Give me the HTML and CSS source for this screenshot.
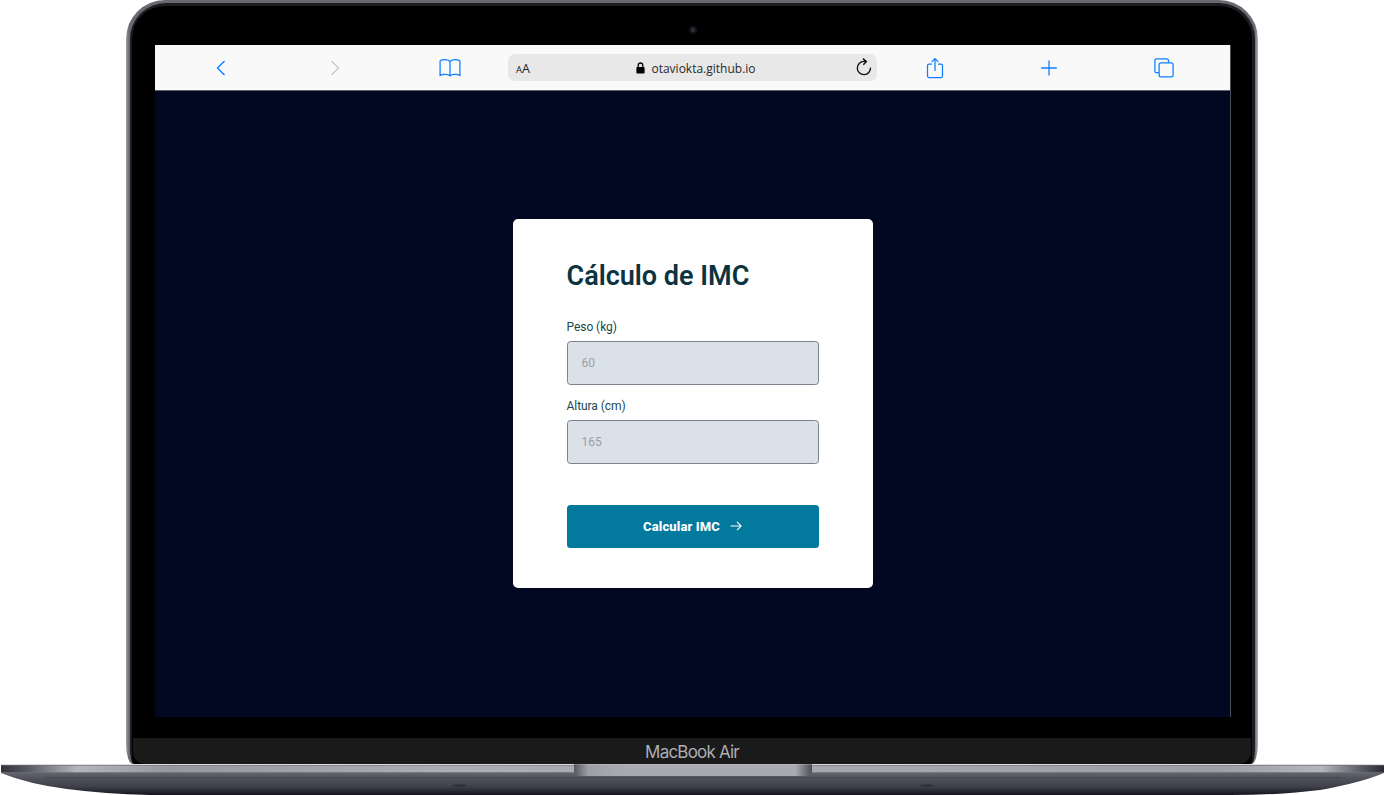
FILE: index.html
```html
<!DOCTYPE html>
<html lang="pt-BR">
<head>
<meta charset="utf-8">
<title>Cálculo de IMC</title>
<link rel="stylesheet" href="styles.css">
</head>
<body>
<div class="laptop">
  <div class="lid">
    <div class="rim">
      <div class="bezel">
        <div class="camera-row"><span class="camera"></span></div>
        <div class="screen">
          <header class="toolbar">
            <span class="tool"><svg width="10" height="16" viewBox="0 0 10 16"><path d="M8.5 1 1.5 8l7 7" stroke-width="1.4"/></svg></span>
            <span class="tool tool-off"><svg width="10" height="16" viewBox="0 0 10 16"><path d="M1.5 1l7 7-7 7" stroke-width="1.4"/></svg></span>
            <span class="tool"><svg width="22" height="18" viewBox="0 0 22 18"><path d="M11 2.6C9.5.3 3.5.1 1.1 2v14.4c2.4-1.4 8.2-1.4 9.9.5 1.7-1.9 7.500-1.9 9.900-.5V2C18.500.1 12.500.3 11 2.600v14.300" stroke-width="1.25"/></svg></span>
            <div class="address">
              <span class="text-size"><small>A</small>A</span>
              <span class="url"><svg width="9" height="12" viewBox="0 0 9 12"><rect x=".4" y="5" width="8.200" height="6.500" rx="1" fill="#000" stroke="none"/><path d="M2.200 5.500V3.300a2.300 2.300 0 0 1 4.600 0v2.200" stroke="#000" stroke-width="1.300"/></svg>otaviokta.github.io</span>
              <svg class="reload" width="16" height="18" viewBox="0 0 16 18"><path d="M14.500 9.600A6.600 6.600 0 1 1 7.900 3.400h2.300M6.900.6l3.500 2.900-3.100 3.300" stroke="#111" stroke-width="1.400"/></svg>
            </div>
            <span class="tool"><svg width="18" height="22" viewBox="0 0 18 22"><path d="M6 7H3Q1.500 7 1.500 8.500V19Q1.500 20.500 3 20.500H15Q16.500 20.500 16.500 19V8.500Q16.500 7 15 7H12M9 14V1.700M5.700 4.900 9 1.600l3.300 3.300" stroke-width="1.250"/></svg></span>
            <span class="tool"><svg width="16" height="16" viewBox="0 0 16 16"><path d="M8 .5v15M.2 8h15.600" stroke-width="1.300"/></svg></span>
            <span class="tool"><svg width="20" height="20" viewBox="0 0 20 20"><path d="M5 14.700H2.700Q.9 14.700.9 12.900V2.700Q.9.900 2.700.900H12.700Q14.500.900 14.500 2.700V4.700" stroke-width="1.250"/><rect x="5.100" y="4.900" width="14" height="14" rx="1.900" stroke-width="1.250"/></svg></span>
          </header>
          <main class="page">
            <form class="card">
              <h1>Cálculo de IMC</h1>
              <label for="peso">Peso (kg)</label>
              <input id="peso" type="text" placeholder="60">
              <label for="altura">Altura (cm)</label>
              <input id="altura" type="text" placeholder="165">
              <button type="button">Calcular IMC<svg width="12" height="10" viewBox="0 0 12 10"><path d="M.5 5h10.500M7 .8 11.200 5 7 9.200" stroke-width="1.100"/></svg></button>
            </form>
          </main>
        </div>
        <div class="chin-wrap"><div class="chin">MacBook Air</div></div>
      </div>
    </div>
  </div>
  <svg class="base" width="1384" height="31" viewBox="0 0 1384 31">
    <defs>
      <linearGradient id="edge">
        <stop offset="0" stop-color="#30313b"/><stop offset=".018" stop-color="#555660"/><stop offset=".055" stop-color="#b5b6bc"/><stop offset=".12" stop-color="#97989e"/><stop offset=".32" stop-color="#acadb3"/><stop offset=".7" stop-color="#a4a5ab"/><stop offset=".88" stop-color="#9d9ea4"/><stop offset=".955" stop-color="#b5b6bc"/><stop offset=".985" stop-color="#555660"/><stop offset="1" stop-color="#282933"/>
      </linearGradient>
      <linearGradient id="under" x2="0" y2="1">
        <stop offset="0" stop-color="#62636b"/><stop offset=".25" stop-color="#50515a"/><stop offset=".6" stop-color="#40414b"/><stop offset=".9" stop-color="#20202b"/><stop offset="1" stop-color="#11101b"/>
      </linearGradient>
      <linearGradient id="notch">
        <stop offset="0" stop-color="#55565f"/><stop offset=".06" stop-color="#9fa0a7"/><stop offset=".2" stop-color="#a9aab1"/><stop offset=".93" stop-color="#aaabb1"/><stop offset="1" stop-color="#4b4c55"/>
      </linearGradient>
    </defs>
    <path d="M1 9Q28 20 67 25 105 30 150 31H1230Q1280 31 1320 26 1360 19 1384 9Z" fill="url(#under)"/>
    <path d="M1 1H1384V9H1Z" fill="url(#edge)"/>
    <path d="M1 1.200H1384M1 8.500H1384" stroke="#6d6e76" stroke-width=".8"/>
    <path d="M45 13.500H1340" stroke="#3d3e48" stroke-width=".6"/>
    <path d="M574 .3H812V8Q811 12 804 12H582Q575 12 574 8Z" fill="url(#notch)"/>
    <path d="M452 21.500q8-2 15 0q-7 2-15 0M919 21.500q7-2 15 0q-8 2-15 0" fill="#34353f" stroke="#2b2c35" stroke-width=".6"/>
  </svg>
</div>
</body>
</html>
```
FILE: styles.css
```css
* { box-sizing: border-box; }
body { margin: 0; background: #fff; font-family: Roboto, sans-serif; overflow: hidden; }
svg { display: block; fill: none; stroke: currentColor; flex: none; }

.laptop { width: 1384px; height: 795px; display: flex; flex-direction: column; align-items: center; }
.lid {
  width: 1132px; height: 764px; padding: 3px 3.500px 0;
  border-radius: 39px 39px 7px 7px / 39px 39px 20px 20px;
  background: linear-gradient(90deg, #a0a1a8 0, #686971 3px, #686971 1129px, #b1b1b8 1132px);
}
.rim { height: 100%; padding: 3px 2.500px 0; background: #1b1c1f; border-radius: 36px 36px 4px 4px / 36px 36px 16px 16px; }
.bezel { height: 100%; background: #000; border-radius: 33px 33px 4px 4px; display: flex; flex-direction: column; align-items: center; }
.camera-row { height: 39px; display: flex; justify-content: center; padding: 20px 0 0 1px; }
.camera { width: 8px; height: 8px; border-radius: 50%; background: radial-gradient(circle, #282f36 0 1.500px, #121417 2.500px); }

.screen { width: 1076px; height: 672px; margin-left: 2px; display: flex; flex-direction: column; border-right: 1px solid #4b4c55; }
.toolbar {
  height: 46px; flex: none; padding-left: 9px; background: #f9f9f9; border-bottom: 1px solid #61626e;
  display: grid; grid-template-columns: 114px 114px 116px 369px 116px 111px 120px; align-items: center;
}
.tool { display: flex; justify-content: center; color: #0a7fff; }
.tool-off { color: #c8c8ca; }
.address {
  height: 27px; padding: 1px 5px 0 8px; border-radius: 7px; background: #e8e8e8;
  display: flex; align-items: center; justify-content: space-between; color: #202020;
  font: 12.500px "Open Sans", sans-serif;
}
.text-size { width: 20px; font-size: 12.500px; white-space: nowrap; }
.text-size small { font-size: 9.500px; }
.url { display: flex; align-items: center; gap: 6px; font-size: 12px; color: #2a2a2a; }
.reload { position: relative; top: -1px; }

.page { flex: 1; background: #030822; padding-top: 128px; display: flex; justify-content: center; align-items: flex-start; }
.card { width: 360px; height: 369px; padding: 41px 54px 0; background: #fff; border-radius: 5px; display: flex; flex-direction: column; }
h1 { margin: 0 0 28px; font-size: 27px; line-height: 32px; font-weight: 600; color: #0b3440; }
label { font-size: 12px; line-height: 14px; margin-bottom: 7px; color: #174a4c; letter-spacing: -.05px; }
input {
  width: 252px; height: 44px; flex: none; margin: 0 0 14px; padding: 0 14px 1px; border: 1px solid #7c828b; border-radius: 3.500px;
  background: #dae1e9; font: 12px Roboto, sans-serif;
}
input::placeholder { color: #999fa7; opacity: 1; }
button {
  width: 252px; height: 43.500px; flex: none; margin-top: 26.500px; padding: 0; border: 0; border-radius: 3.500px; background: #03799e; color: #fff;
  font: 800 13px Roboto, sans-serif; letter-spacing: .12px; display: flex; align-items: center; justify-content: center; gap: 10px;
}
.chin-wrap { width: 100%; margin-top: auto; padding: 0 1px; }
.chin { height: 26px; background: #1a1a1a; border-radius: 0 0 12px 12px; text-align: center; color: #adaeb4; font: 17px/28px Inter, sans-serif; letter-spacing: -.8px; }
.base { flex: none; stroke: none; }
```
